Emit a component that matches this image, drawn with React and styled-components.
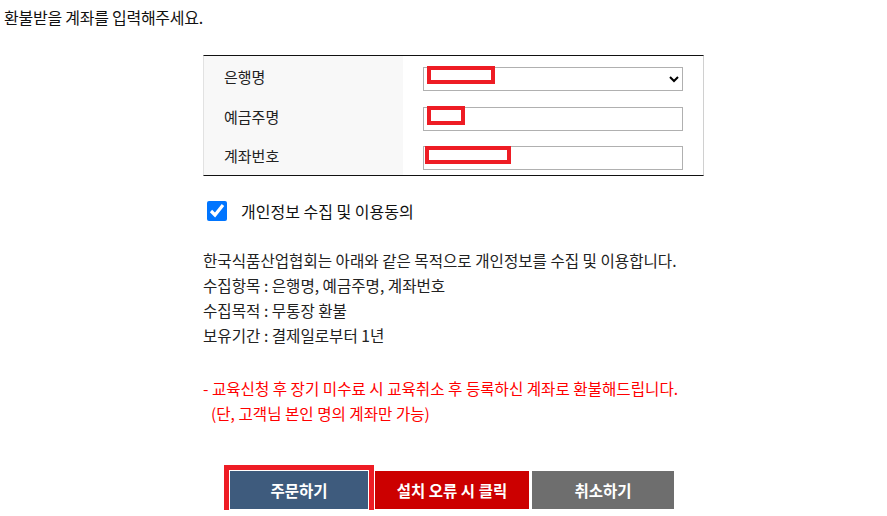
import styled, { createGlobalStyle } from "styled-components";

const GlobalStyle = createGlobalStyle`
  html, body {
    margin: 0;
    padding: 0;
    background: #fff;
  }
  body {
    font-family: "Noto Sans CJK KR", "Noto Sans", sans-serif;
    color: #222;
  }
`;

const fields = [
  { label: "은행명", type: "select", mark: { left: 4, width: 68, height: 18 } },
  { label: "예금주명", type: "input", mark: { left: 4, width: 38, height: 19 } },
  { label: "계좌번호", type: "input", mark: { left: 2, width: 86, height: 18 } },
];

export default function App() {
  return (
    <Page>
      <GlobalStyle />
      <Title>환불받을 계좌를 입력해주세요.</Title>
      <Section>
        <Table>
          {fields.map((f) => (
            <Row key={f.label}>
              <Label>{f.label}</Label>
              <Cell>
                <Field>
                  {f.type === "select" ? (
                    <Select defaultValue="">
                      <option value=""></option>
                    </Select>
                  ) : (
                    <Input type="text" />
                  )}
                  <Redact
                    style={{
                      left: f.mark.left,
                      width: f.mark.width,
                      height: f.mark.height,
                    }}
                  />
                </Field>
              </Cell>
            </Row>
          ))}
        </Table>

        <Agree>
          <Check type="checkbox" defaultChecked />
          <AgreeText>개인정보 수집 및 이용동의</AgreeText>
        </Agree>

        <Notice>
          <Line>한국식품산업협회는 아래와 같은 목적으로 개인정보를 수집 및 이용합니다.</Line>
          <Line>수집항목 : 은행명, 예금주명, 계좌번호</Line>
          <Line>수집목적 : 무통장 환불</Line>
          <Line>보유기간 : 결제일로부터 1년</Line>
        </Notice>

        <Warning>
          <Line>- 교육신청 후 장기 미수료 시 교육취소 후 등록하신 계좌로 환불해드립니다.</Line>
          <Line $indent>(단, 고객님 본인 명의 계좌만 가능)</Line>
        </Warning>

        <Buttons>
          <Button $tone="primary">주문하기</Button>
          <Button $tone="danger">설치 오류 시 클릭</Button>
          <Button $tone="muted">취소하기</Button>
        </Buttons>
      </Section>
    </Page>
  );
}

const Page = styled.div`
  padding: 5px 4px 0;
`;

const Title = styled.h2`
  margin: 0;
  font-size: 16px;
  font-weight: 400;
  line-height: 24px;
  letter-spacing: -0.25px;
  color: #111;
`;

const Section = styled.div`
  width: 501px;
  margin: 26px 0 0 199px;
`;

const Table = styled.div`
  border-top: 1px solid #111;
  border-bottom: 1px solid #111;
  border-left: 1px solid #e2e2e2;
  border-right: 1px solid #d0d0d0;
`;

const Row = styled.div`
  display: grid;
  grid-template-columns: 199px 1fr;
  height: 40px;
  &:last-child {
    height: 39px;
  }
`;

const Label = styled.div`
  background: #f8f8f8;
  display: flex;
  align-items: center;
  padding-left: 20px;
  font-size: 15px;
  color: #222;
`;

const Cell = styled.div`
  display: flex;
  align-items: center;
  padding-left: 20px;
`;

const Field = styled.div`
  position: relative;
  width: 260px;
  height: 24px;
`;

const Input = styled.input`
  box-sizing: border-box;
  width: 100%;
  height: 100%;
  border: 1px solid #b0b0b0;
  border-radius: 0;
  padding: 0 4px;
  outline: none;
  background: #fff;
`;

const Select = styled.select`
  box-sizing: border-box;
  width: 100%;
  height: 100%;
  border: 1px solid #b0b0b0;
  border-radius: 0;
  background: #fff;
  outline: none;
`;

const Redact = styled.span`
  position: absolute;
  top: 2px;
  box-sizing: border-box;
  border: 4px solid #ee1c24;
  pointer-events: none;
`;

const Agree = styled.label`
  display: flex;
  align-items: center;
  gap: 14px;
  height: 20px;
  line-height: 20px;
  margin: 25px 0 0 4px;
`;

const Check = styled.input`
  width: 20px;
  height: 20px;
  margin: 0;
  accent-color: #0075ff;
`;

const AgreeText = styled.span`
  font-size: 16px;
  font-weight: 400;
  color: #111;
`;

const Notice = styled.div`
  margin-top: 27px;
  font-size: 15.6px;
  color: #222;
`;

const Line = styled.div`
  line-height: 25px;
  height: 25px;
  white-space: nowrap;
  padding-left: ${(p) => (p.$indent ? "8px" : "0")};
`;

const Warning = styled.div`
  margin-top: 28px;
  font-size: 15.6px;
  color: #ff0000;
`;

const tones = {
  primary: "#3e5b7d",
  danger: "#cc0000",
  muted: "#6e6e6e",
};

const Button = styled.button`
  box-sizing: border-box;
  height: ${(p) => (p.$tone === "primary" ? "40px" : "38px")};
  width: ${(p) => (p.$tone === "primary" ? "140px" : p.$tone === "danger" ? "154px" : "142px")};
  margin-right: ${(p) => (p.$tone === "primary" ? "6px" : "3px")};
  border: ${(p) => (p.$tone === "primary" ? "1px solid #fff" : "none")};
  outline: ${(p) => (p.$tone === "primary" ? "5px solid #ee1c24" : "none")};
  background: ${(p) => tones[p.$tone]};
  color: #fff;
  font-family: "Noto Sans CJK KR", "Noto Sans", sans-serif;
  font-size: 15.5px;
  font-weight: 700;
  padding: 0;
  cursor: pointer;
`;

const Buttons = styled.div`
  display: flex;
  align-items: center;
  padding-left: 26px;
  margin-top: 44px;
`;
